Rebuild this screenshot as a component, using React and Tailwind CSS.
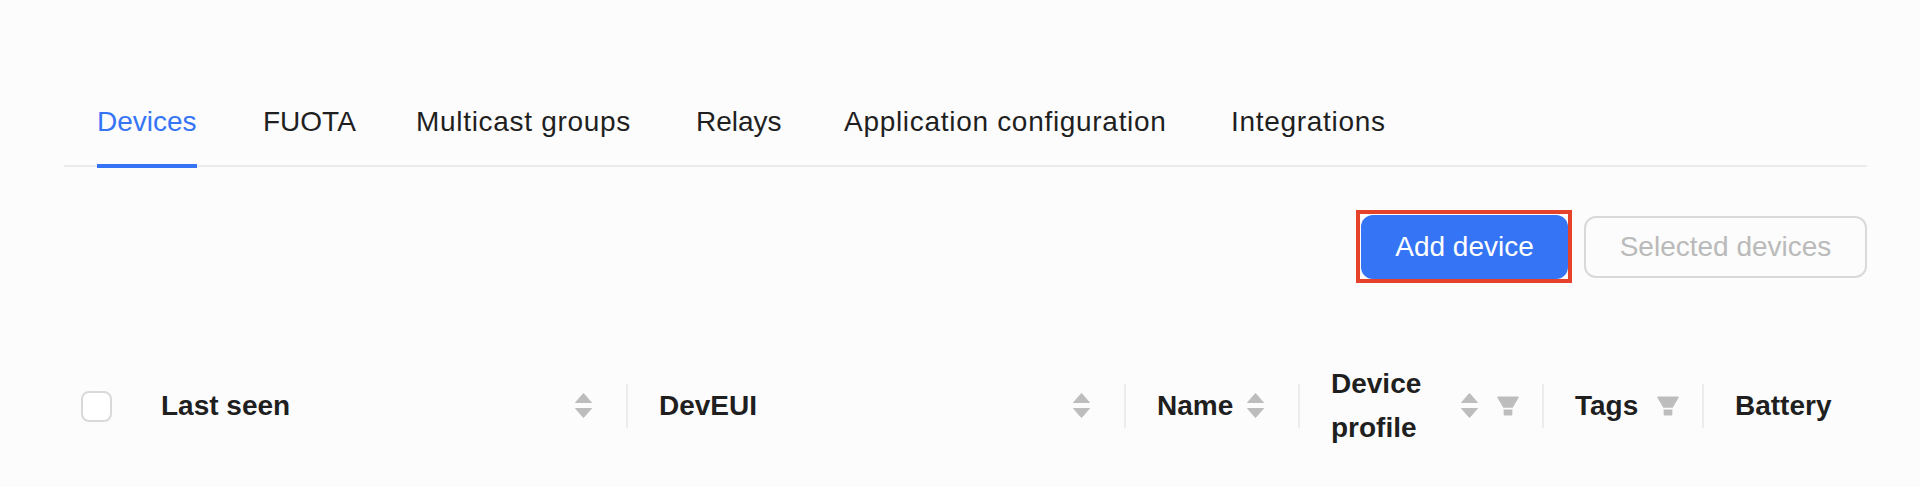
import React from "react";

const tabs = [
  { label: "Devices", cls: "w-[166px]" },
  { label: "FUOTA", cls: "w-[153px]" },
  { label: "Multicast groups", cls: "w-[280px] tracking-[0.7px]" },
  { label: "Relays", cls: "w-[148px]" },
  { label: "Application configuration", cls: "w-[387px] tracking-[0.7px]" },
  { label: "Integrations", cls: "w-[160px] tracking-[0.7px]" },
];

const columns = [
  { title: "Last seen", width: "w-[498px]", sort: true, divider: true },
  { title: "DevEUI", width: "w-[498px]", sort: true, divider: true },
  { title: "Name", width: "w-[174px]", sort: true, divider: true },
  { title: "Device profile", width: "w-[244px]", sort: true, filter: true, divider: true },
  { title: "Tags", width: "w-[160px]", filter: true, divider: true },
  { title: "Battery", width: "w-[164px]" },
];

const SortIcon = ({ className }) => (
  <svg width="17" height="26" viewBox="0 0 17 26" className={className}>
    <path d="M8.5 0.5 L16.5 9.5 L0.5 9.5 Z" fill="#bdbdbd" strokeLinejoin="round" stroke="#bdbdbd" strokeWidth="1" />
    <path d="M0.5 15.5 L16.5 15.5 L8.5 24.5 Z" fill="#bdbdbd" strokeLinejoin="round" stroke="#bdbdbd" strokeWidth="1" />
  </svg>
);

const FilterIcon = () => (
  <svg width="24" height="24" viewBox="64 64 896 896" className="shrink-0">
    <path
      fill="#bdbdbd"
      d="M349 838c0 17.7 14.2 32 31.8 32h262.4c17.6 0 31.8-14.3 31.8-32V642H349v196zm531.1-684H143.9c-24.5 0-39.8 26.7-27.5 48l221.3 376h348.8l221.3-376c12.1-21.3-3.2-48-27.7-48z"
    />
  </svg>
);

const App = () => {
  return (
    <div className="w-[1920px] h-[487px] overflow-hidden bg-[#fcfcfc] pt-[79px] pl-[64px] pr-[53px] font-['Liberation_Sans',Arial,sans-serif] text-[#1f1f1f]">
      {/* tabs */}
      <div className="flex h-[88px] pl-[33px] border-b-2 border-[#ebebeb]">
        {tabs.map((t, i) => (
          <div key={t.label} className={`${t.cls} shrink-0 flex text-[28px] leading-[44px]`}>
            <span
              className={
                i === 0
                  ? "relative flex items-center text-[#3575f5]"
                  : "relative flex items-center text-[#1f1f1f]"
              }
            >
              {t.label}
              {i === 0 && <span className="absolute left-0 right-0 bottom-[-3px] h-[4px] bg-[#3575f5]" />}
            </span>
          </div>
        ))}
      </div>

      {/* actions */}
      <div className="flex items-center justify-end gap-[12px] mt-[43px]">
        <div className="border-4 border-[#e5422b] pl-px pt-px">
          <button className="w-[207px] h-[64px] rounded-[12px] bg-[#3575f5] text-white text-[28px] leading-[44px]">
            Add device
          </button>
        </div>
        <button className="w-[283px] h-[62px] rounded-[12px] border-2 border-[#d9d9d9] text-[#bababa] text-[28px] leading-[44px]">
          Selected devices
        </button>
      </div>

      {/* table header */}
      <div className="flex h-[152px] mt-[47px] text-[28px] leading-[44px] font-bold">
        <div className="w-[65px] flex items-center justify-center">
          <span className="w-[31px] h-[31px] rounded-[8px] border-2 border-[#d9d9d9] bg-white" />
        </div>
        {columns.map((c) => (
          <div key={c.title} className={`${c.width} relative flex items-center px-[32px]`}>
            <span className="flex-1">{c.title}</span>
            {c.sort && <SortIcon className={c.filter ? "shrink-0" : "shrink-0 mr-[3px]"} />}
            {c.filter && (
              <span className="ml-[18px] mr-[-9px] flex">
                <FilterIcon />
              </span>
            )}
            {c.divider && (
              <span className="absolute right-[-1px] top-1/2 -translate-y-1/2 h-[44px] w-[2px] bg-[#ececec]" />
            )}
          </div>
        ))}
      </div>
    </div>
  );
};

export default App;
